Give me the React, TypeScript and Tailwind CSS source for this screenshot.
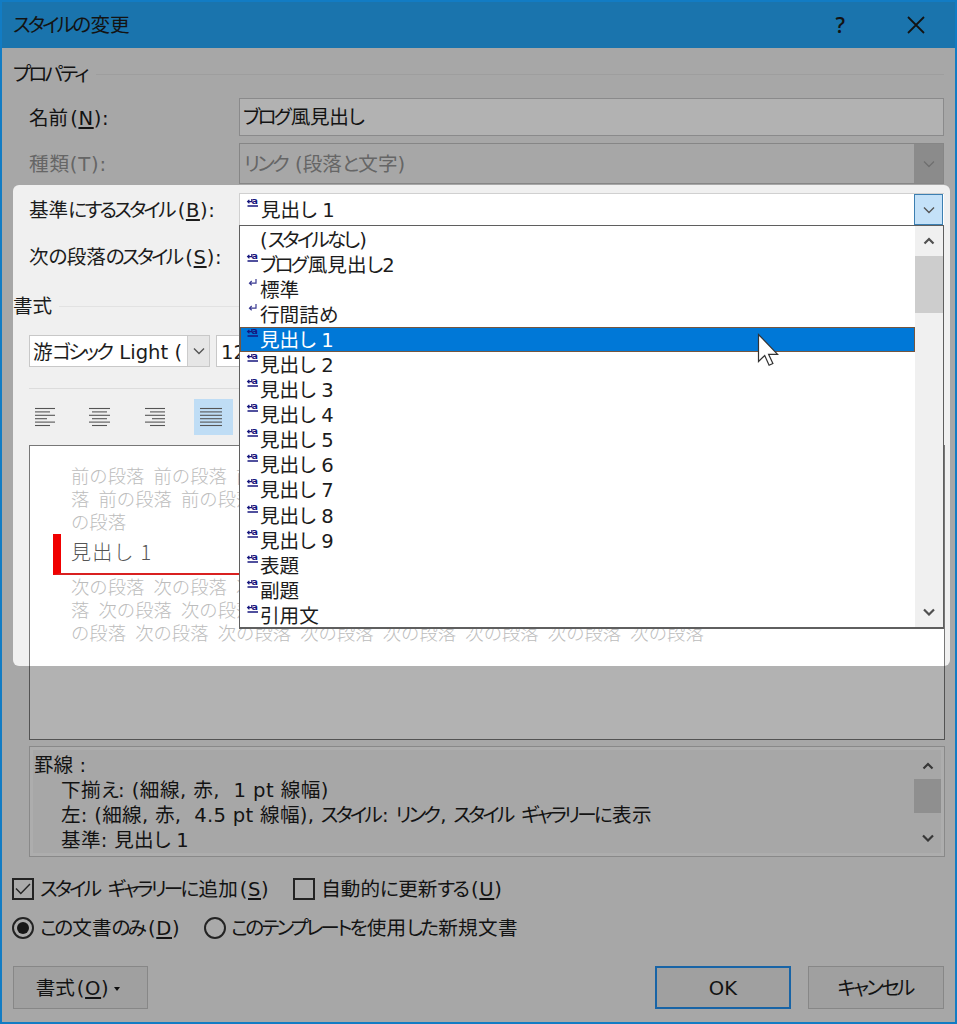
import React from 'react';
import clsx from 'clsx';

const STYLES = [
  { name: '(スタイルなし)', kind: 'none' },
  { name: 'ブログ風見出し2', kind: 'linked' },
  { name: '標準', kind: 'paragraph' },
  { name: '行間詰め', kind: 'paragraph' },
  { name: '見出し 1', kind: 'linked' },
  { name: '見出し 2', kind: 'linked' },
  { name: '見出し 3', kind: 'linked' },
  { name: '見出し 4', kind: 'linked' },
  { name: '見出し 5', kind: 'linked' },
  { name: '見出し 6', kind: 'linked' },
  { name: '見出し 7', kind: 'linked' },
  { name: '見出し 8', kind: 'linked' },
  { name: '見出し 9', kind: 'linked' },
  { name: '表題', kind: 'linked' },
  { name: '副題', kind: 'linked' },
  { name: '引用文', kind: 'linked' },
];

const SELECTED = '見出し 1';

/** UI text: kana is set tighter than kanji, the access key is underlined */
function Label({ text, accessKey, className }: { text: string; accessKey?: string; className?: string }) {
  const runs = text.split(/([\u3040-\u30ff]+)/).filter(Boolean);
  return (
    <span className={clsx('whitespace-pre', className)}>
      {runs.map((run, i) => (
        <span key={i} className={/[\u3040-\u30ff]/.test(run) ? 'mr-[0.1em] tracking-[-0.14em]' : ''}>
          {run}
        </span>
      ))}
      {accessKey && (
        <span className="ml-[2px] tracking-[0.6px]">
          (<span className="underline decoration-2 underline-offset-2">{accessKey}</span>)
        </span>
      )}
    </span>
  );
}

function Chevron({ up, bold, className }: { up?: boolean; bold?: boolean; className?: string }) {
  return (
    <svg width="12" height="8" viewBox="0 0 12 8" fill="none" stroke="currentColor" strokeWidth={bold ? 2.2 : 1.4} className={className}>
      <path d={up ? 'M1.5 6.5 6 2l4.5 4.5' : 'M1 1.5 6 6.5l5-5'} />
    </svg>
  );
}

function StyleIcon({ kind }: { kind: string }) {
  if (kind === 'linked') {
    return (
      <svg width="12" height="10" viewBox="0 0 12 10" fill="none" stroke="#16167e" className="overflow-visible">
        <path d="M4.8 1v2.6H.6M2.4 1.8.6 3.6l1.8 1.8" strokeWidth="1.2" />
        <text x="4.6" y="5.8" fontSize="9.5" fontWeight="700" fill="#16167e" stroke="none">a</text>
        <path d="M.5 8h10.5" strokeWidth="1.5" />
      </svg>
    );
  }
  if (kind === 'paragraph') {
    return (
      <svg width="12" height="10" viewBox="0 0 12 10" fill="none" stroke="#3a3a92">
        <path d="M9 1v4.2H2.5M4.7 3 2.5 5.2l2.2 2" strokeWidth="1.2" />
      </svg>
    );
  }
  return null;
}

function AlignIcon({ rows }: { rows: [number, number][] }) {
  return (
    <svg width="22" height="20" viewBox="0 0 22 20" stroke="#555" strokeWidth="1.1">
      {rows.map(([from, to], i) => (
        <path key={i} d={`M${from} ${1.5 + i * 3.4}H${to}`} />
      ))}
    </svg>
  );
}

function GroupHeader({ text, className }: { text: string; className?: string }) {
  return (
    <div className={clsx('flex h-6 items-center gap-[7px] pl-[13px] pr-[13px]', className)}>
      <Label text={text} className="pt-px" />
      <div className="h-px flex-1 bg-[#e2e2e2]" />
    </div>
  );
}

function StyleList() {
  return (
    <div className="absolute left-[239px] top-[225px] flex h-[404px] w-[705px] border border-b-2 border-[#5f5f5f] bg-white">
      <ul className="flex-1 pt-px">
        {STYLES.map((s) => (
          <li
            key={s.name}
            className={clsx(
              'flex h-[25.05px] items-start border pl-[6px]',
              s.name === SELECTED ? 'border-[#75563f] bg-[#0078d7] bg-clip-padding text-white' : 'border-transparent',
            )}
          >
            <span className="w-[13px] leading-none">
              <StyleIcon kind={s.kind} />
            </span>
            <Label text={s.name} className="leading-[25px]" />
          </li>
        ))}
      </ul>
      <div className="flex w-[28px] flex-col items-center bg-[#f0f0f0] text-[#505050]">
        <Chevron up bold className="my-[11px] shrink-0" />
        <div className="h-[57px] w-full bg-[#cdcdcd]" />
        <Chevron bold className="mb-[11px] mt-auto shrink-0" />
      </div>
    </div>
  );
}

export default function App() {
  return (
    <div className="relative flex h-[1024px] w-[957px] flex-col overflow-hidden bg-[#f0f0f0] font-['DejaVu_Sans','Noto_Sans_CJK_JP',sans-serif] text-[19.6px] leading-[25px] text-[#1c1c1c] [font-feature-settings:'palt']">
      {/* Title bar */}
      <header className="flex h-12 shrink-0 items-center bg-[#26a7f8] pl-[13px] pr-[32px] pt-0.5">
        <Label text="スタイルの変更" className="flex-1" />
        <span className="mr-[62px] font-['Open_Sans',sans-serif] text-[21px] font-semibold">?</span>
        <svg width="18" height="18" viewBox="0 0 18 18" stroke="currentColor" strokeWidth="1.8">
          <path d="M1 1l16 16M17 1 1 17" />
        </svg>
      </header>

      <GroupHeader text="プロパティ" className="mt-[14px]" />
      <div className="mt-3 flex h-[38px] items-center pl-[29px] pr-[13px]">
        <span className="w-[210px] pt-0.5"><Label text="名前" accessKey="N" />:</span>
        <div className="flex h-full flex-1 items-center border border-[#c6c6c8] bg-white pl-[3px]">
          <Label text="ブログ風見出し" className="tracking-[-0.4px]" />
        </div>
      </div>
      <div className="mt-[7px] flex h-[41px] items-center pl-[29px] pr-[13px] text-[#929292]">
        <span className="w-[210px] pt-0.5 tracking-[0.8px]">種類(T):</span>
        <div className="flex h-full flex-1 items-center border border-[#c0c0c0] pl-1">
          <Label text="リンク (段落と文字)" className="flex-1 pt-0.5" />
          <div className="flex h-full w-[29px] items-center justify-center bg-[#c8c8c8] text-[#a0a0a0]">
            <Chevron />
          </div>
        </div>
      </div>
      <div className="mt-[9px] flex h-8 items-center pl-[29px] pr-[13px]">
        <span className="w-[210px] pt-0.5"><Label text="基準にするスタイル" accessKey="B" />:</span>
        <div className="flex h-full flex-1 items-center border-l border-t border-[#d0d0d0] bg-white pl-[7px]">
          <span className="w-[14px] self-start pt-1 leading-none"><StyleIcon kind="linked" /></span>
          <Label text={SELECTED} className="flex-1 pt-0.5" />
          <div className="mr-px flex h-full w-[29px] items-center justify-center border border-[#3c7fb1] bg-[#c4e1f8] text-[#555]">
            <Chevron />
          </div>
        </div>
      </div>
      <div className="mt-[20px] h-[25px] pl-[29px]">
        <Label text="次の段落のスタイル" accessKey="S" />:
      </div>

      <GroupHeader text="書式" className="mt-6" />
      <div className="mt-[17px] flex h-8 gap-1.5 pl-[29px]">
        <div className="flex w-[181px] items-center border border-[#c8c8c8] bg-white pl-[3px]">
          <div className="flex-1 overflow-hidden whitespace-nowrap pt-0.5"><Label text="游ゴシック Light (" /></div>
          <div className="ml-px flex h-full w-[22px] items-center justify-center border-l border-[#ccc] bg-[#e6e6e6] text-[#555]">
            <Chevron />
          </div>
        </div>
        <div className="flex w-[80px] items-center border border-[#c8c8c8] bg-white pl-1 pt-0.5">12</div>
      </div>
      <div className="ml-[29px] mr-[13px] mt-[21px] h-px bg-[#dcdcdc]" />
      <div className="mt-[10px] flex h-9 items-center pl-[26px]">
        <div className="flex h-full w-[38px] items-center justify-center"><AlignIcon rows={[[1, 21], [1, 16], [1, 21], [1, 13], [1, 21], [1, 16]]} /></div>
        <div className="ml-[17px] flex h-full w-[38px] items-center justify-center"><AlignIcon rows={[[0, 21], [3, 18], [0, 21], [3, 18], [0, 21], [3, 18]]} /></div>
        <div className="ml-[17px] flex h-full w-[38px] items-center justify-center"><AlignIcon rows={[[1, 21], [6, 21], [1, 21], [8, 21], [1, 21], [6, 21]]} /></div>
        <div className="ml-[20px] flex h-full w-[39px] items-center justify-center bg-[#bfddf5] pr-[6px]"><AlignIcon rows={[[0, 22], [0, 22], [0, 22], [0, 22], [0, 22], [0, 22]]} /></div>
      </div>

      {/* Preview */}
      <div className="ml-[29px] mt-[10px] h-[295px] w-[916px] shrink-0 border border-[#777] bg-white pt-[18px] font-['Noto_Sans_CJK_JP',sans-serif] text-[18.35px] font-light leading-[23.2px] text-[#bcbcbc] [font-feature-settings:normal]">
        <div className="whitespace-pre pl-[41px] [word-spacing:5.1px]">
          <div>前の段落 前の段落 前</div>
          <div>落 前の段落 前の段落</div>
          <div>の段落</div>
        </div>
        <div className="ml-[23px] mr-[30px] h-[41px] border-b-2 border-l-8 border-b-[#d92020] border-l-[#f00000] pl-[10px] text-[20px] leading-[36px] tracking-[1.3px] text-[#555]">
          見出し 1
        </div>
        <div className="whitespace-pre pl-[41px] [word-spacing:5.1px]">
          <div>次の段落 次の段落 次</div>
          <div>落 次の段落 次の段落</div>
          <div>の段落 次の段落 次の段落 次の段落 次の段落 次の段落 次の段落 次の段落</div>
        </div>
      </div>

      {/* Description */}
      <div className="ml-[29px] mt-[6px] flex h-[111px] w-[916px] shrink-0 border border-[#c4c4c4] bg-[#f8f8f8] p-[3px]">
        <div className="flex-1 bg-[#f0f0f0] pl-px pt-[3px]">
          <div><Label text="罫線 :" /></div>
          <div className="pl-[27px] tracking-[0.45px]"><Label text="下揃え: (細線, 赤,  1 pt 線幅)" /></div>
          <div className="pl-[27px] tracking-[0.28px]"><Label text="左: (細線, 赤,  4.5 pt 線幅), スタイル: リンク, スタイル ギャラリーに表示" /></div>
          <div className="pl-[27px] tracking-[0.3px]"><Label text="基準: 見出し 1" /></div>
        </div>
        <div className="flex w-[27px] flex-col items-center bg-[#f0f0f0] text-[#505050]">
          <Chevron up bold className="mb-[9px] mt-[12px] shrink-0" />
          <div className="h-[34px] w-full bg-[#cdcdcd]" />
          <Chevron bold className="mb-[11px] mt-auto shrink-0" />
        </div>
      </div>

      <div className="mt-[19px] flex h-[26px] items-center pl-[12px]">
        <div className="mr-[6px] flex h-[22px] w-[22px] items-center justify-center border-2 border-[#333] bg-[#f4f4f4]">
          <svg width="18" height="16" viewBox="0 0 18 16" fill="none" stroke="#333" strokeWidth="1.4">
            <path d="M2 7.5 6.8 12.5 16 3" />
          </svg>
        </div>
        <Label text="スタイル ギャラリーに追加" accessKey="S" className="pt-px" />
        <div className="ml-[24px] mr-[6px] h-[22px] w-[22px] border-2 border-[#333] bg-[#f4f4f4]" />
        <Label text="自動的に更新する" accessKey="U" className="pt-px" />
      </div>
      <div className="mt-[13px] flex h-[26px] items-center pl-[12px]">
        <div className="mr-[6px] flex h-[22px] w-[22px] items-center justify-center rounded-full border-2 border-[#333] bg-[#f4f4f4]">
          <div className="h-3 w-3 rounded-full bg-[#222]" />
        </div>
        <Label text="この文書のみ" accessKey="D" className="pt-px" />
        <div className="ml-[24px] mr-[5px] h-[22px] w-[22px] rounded-full border-2 border-[#333] bg-[#f4f4f4]" />
        <Label text="このテンプレートを使用した新規文書" className="pt-px tracking-[0.3px]" />
      </div>

      <footer className="mt-[25px] flex h-[43px] pl-[13px] pr-[13px]">
        <button className="flex w-[135px] items-center justify-center border border-[#c2c2c2] bg-[#e5e5e5] pr-[5px] pt-0.5">
          <Label text="書式" accessKey="O" />
          <svg width="6" height="4" viewBox="0 0 6 4" className="ml-[5px]"><path d="M0 0h6L3 4z" fill="#161616" /></svg>
        </button>
        <button className="ml-auto w-[136px] border-2 border-[#2390ee] bg-[#e5e5e5] pt-0.5">OK</button>
        <button className="ml-[17px] w-[136px] border border-[#c2c2c2] bg-[#e5e5e5] pt-0.5"><Label text="キャンセル" /></button>
      </footer>

      <StyleList />

      {/* Mouse pointer */}
      <svg width="22" height="34" viewBox="0 0 22 34" className="absolute left-[757px] top-[333px]">
        <path d="M1.5 1.5v27l6.2-6 4.4 9.8 3.8-1.8-4.3-9.2h9z" fill="#fff" stroke="#333" strokeWidth="1.2" />
      </svg>

      {/* Spotlight: everything outside of it is dimmed */}
      <div className="pointer-events-none absolute left-[13px] top-[185px] h-[481px] w-[937px] rounded-md shadow-[0_0_0_1200px_rgba(0,0,0,0.3)]" />
      <div className="pointer-events-none absolute inset-0 border-2 border-[#127cc4]" />
    </div>
  );
}
